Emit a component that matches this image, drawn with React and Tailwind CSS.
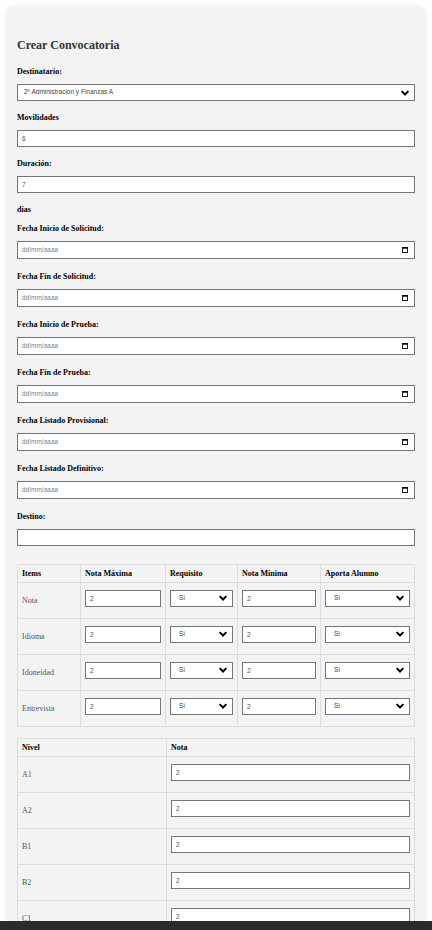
import { useState } from "react";

const serif = "font-['Liberation_Serif','Times_New_Roman',serif]";
const sans = "font-['Liberation_Sans',Arial,sans-serif]";

const items = ["Nota", "Idioma", "Idoneidad", "Entrevista"];
const niveles = ["A1", "A2", "B1", "B2", "C1", "C2"];

const Chevron = () => (
  <svg
    viewBox="0 0 12 8"
    className="pointer-events-none absolute right-[5px] top-1/2 h-[6px] w-[10px] -translate-y-1/2"
  >
    <path d="M1.5 1.5 6 6l4.5-4.5" fill="none" stroke="#000" strokeWidth="2.6" />
  </svg>
);

const Select = ({ value, options, className = "", pad = "pl-[8px]" }) => (
  <div className={`relative ${className}`}>
    <select
      defaultValue={value}
      className={`block h-[17px] w-full appearance-none border border-[#767676] bg-white ${pad} pr-[18px] text-[6.5px] leading-none text-[#444] outline-none ${sans}`}
    >
      {options.map((o) => (
        <option key={o}>{o}</option>
      ))}
    </select>
    <Chevron />
  </div>
);

const TextInput = ({ value = "", className = "" }) => (
  <input
    type="text"
    defaultValue={value}
    className={`block h-[17px] w-full border border-[#767676] bg-white px-[4px] text-[6.5px] leading-none text-[#555] outline-none ${sans} ${className}`}
  />
);

const DateInput = () => (
  <div className={`flex h-[18px] w-full items-center justify-between border border-[#767676] bg-white pl-[4px] pr-[6px] ${sans}`}>
    <span className="text-[6.5px] leading-none text-[#7a7f8c]">dd/mm/aaaa</span>
    <svg viewBox="0 0 7 7" className="h-[6px] w-[6px]">
      <rect x="0.5" y="0.5" width="6" height="6" fill="none" stroke="#000" strokeWidth="1" />
      <rect x="0" y="0" width="7" height="2" fill="#000" />
    </svg>
  </div>
);

const Label = ({ children, className = "" }) => (
  <p className={`h-[10px] text-[8px] font-bold leading-[10px] text-black ${className}`}>{children}</p>
);

const Field = ({ label, children, date = false }) => (
  <div className={date ? "mb-[13px]" : "mb-[12px]"}>
    <Label className="mb-[7px]">{label}</Label>
    {children}
  </div>
);

const th = "h-[18px] border border-[#dddddd] px-[4px] py-0 text-left align-middle text-[8px] font-bold leading-[10px] text-black";
const td = "h-[36px] border border-[#dddddd] px-[4px] pt-[6px] pb-[5px] align-middle text-[8px] leading-[10px]";

export default function App() {
  const [fechas] = useState([
    "Fecha Inicio de Solicitud:",
    "Fecha Fin de Solicitud:",
    "Fecha Inicio de Prueba:",
    "Fecha Fin de Prueba:",
    "Fecha Listado Provisional:",
    "Fecha Listado Definitivo:",
  ]);

  return (
    <div className={`min-h-[930px] bg-white px-[6px] pt-[6px] ${serif}`}>
      <div className="rounded-[8px] bg-[#f3f3f3] px-[11px] pt-[31px] pb-[20px] shadow-[0_0_6px_rgba(0,0,0,0.06)]">
        <h2 className="mb-[14px] h-[16px] text-[12px] font-bold leading-[16px] text-[#333]">
          Crear Convocatoria
        </h2>

        <Field label="Destinatario:">
          <Select value="2º Administración y Finanzas A" options={["2º Administración y Finanzas A"]} pad="pl-[6px]" />
        </Field>

        <Field label="Movilidades">
          <TextInput value="6" />
        </Field>

        <Field label="Duración:">
          <TextInput value="7" />
        </Field>

        <Label className="mb-[9px]">días</Label>

        {fechas.map((f) => (
          <Field key={f} label={f} date>
            <DateInput />
          </Field>
        ))}

        <div className="mb-[18px]">
          <Label className="mb-[7px]">Destino:</Label>
          <TextInput />
        </div>

        <table className="mb-[11px] w-full table-fixed border-collapse">
          <colgroup>
            <col className="w-[63px]" />
            <col className="w-[85px]" />
            <col className="w-[72px]" />
            <col className="w-[83px]" />
            <col />
          </colgroup>
          <thead>
            <tr>
              <th className={th}>Items</th>
              <th className={th}>Nota Máxima</th>
              <th className={th}>Requisito</th>
              <th className={th}>Nota Mínima</th>
              <th className={th}>Aporta Alumno</th>
            </tr>
          </thead>
          <tbody>
            {items.map((it) => (
              <tr key={it}>
                <td className={`${td} text-[#555]`}>{it}</td>
                <td className={td}>
                  <TextInput value="2" className="mb-[6px]" />
                </td>
                <td className={td}>
                  <Select value="Sí" options={["Sí", "No"]} className="mb-[6px]" />
                </td>
                <td className={td}>
                  <TextInput value="2" className="mb-[6px]" />
                </td>
                <td className={td}>
                  <Select value="Sí" options={["Sí", "No"]} className="mb-[6px]" />
                </td>
              </tr>
            ))}
          </tbody>
        </table>

        <table className="w-full table-fixed border-collapse">
          <colgroup>
            <col className="w-[149px]" />
            <col />
          </colgroup>
          <thead>
            <tr>
              <th className={th}>Nivel</th>
              <th className={th}>Nota</th>
            </tr>
          </thead>
          <tbody>
            {niveles.map((n) => (
              <tr key={n}>
                <td className={`${td} text-[#555]`}>{n}</td>
                <td className={td}>
                  <TextInput value="2" className="mb-[6px]" />
                </td>
              </tr>
            ))}
          </tbody>
        </table>
      </div>

      <div className="fixed inset-x-0 bottom-0 h-[9px] bg-[#2b2b2b]" />
    </div>
  );
}
